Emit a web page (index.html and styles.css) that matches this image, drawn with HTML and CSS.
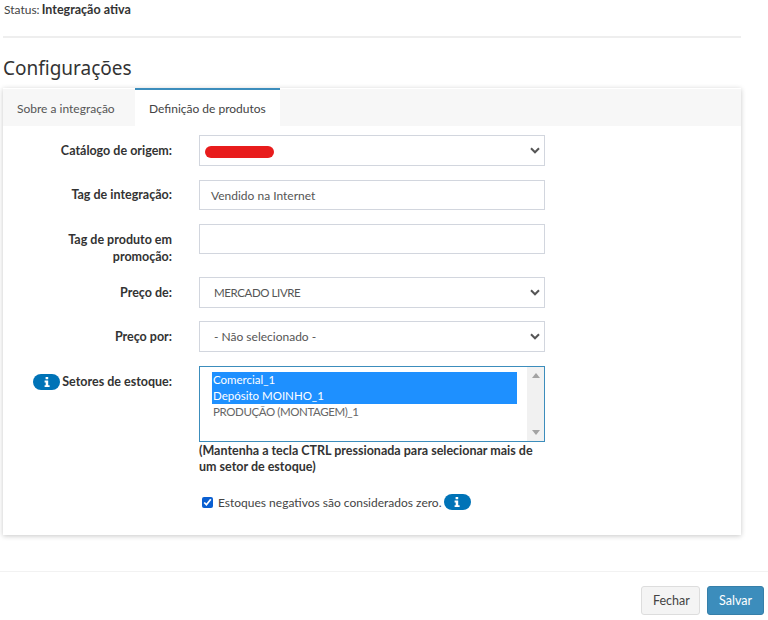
FILE: index.html
```html
<!DOCTYPE html>
<html lang="pt-BR">
<head>
<meta charset="utf-8">
<title>Configurações</title>
<link rel="stylesheet" href="styles.css">
</head>
<body>
<main class="content">
  <p class="status">Status: <strong>Integração ativa</strong></p>
  <hr class="rule">
  <h2 class="title">Configurações</h2>
  <section class="card">
    <nav class="tabs">
      <a class="tab">Sobre a integração</a>
      <a class="tab active">Definição de produtos</a>
    </nav>
    <form class="form">
      <div class="row row-select">
        <label class="label">Catálogo de origem:</label>
        <div class="control select">
          <span class="redaction"></span>
          <svg class="chev" width="10" height="7" viewBox="0 0 10 7"><path d="M1 1.3l4 4 4-4" fill="none" stroke="#555" stroke-width="2"/></svg>
        </div>
      </div>
      <div class="row row-input">
        <label class="label">Tag de integração:</label>
        <div class="control input">Vendido na Internet</div>
      </div>
      <div class="row row-input tall">
        <label class="label">Tag de produto em promoção:</label>
        <div class="control input"></div>
      </div>
      <div class="row row-select tight">
        <label class="label">Preço de:</label>
        <div class="control select"><span class="caps-value">MERCADO LIVRE</span>
          <svg class="chev" width="10" height="7" viewBox="0 0 10 7"><path d="M1 1.3l4 4 4-4" fill="none" stroke="#555" stroke-width="2"/></svg>
        </div>
      </div>
      <div class="row row-select">
        <label class="label">Preço por:</label>
        <div class="control select"><span>- Não selecionado -</span>
          <svg class="chev" width="10" height="7" viewBox="0 0 10 7"><path d="M1 1.3l4 4 4-4" fill="none" stroke="#555" stroke-width="2"/></svg>
        </div>
      </div>
      <div class="row row-list">
        <label class="label"><span class="info"><svg width="6" height="10" viewBox="0 0 6 10"><path d="M1.600 0h2.600v2.200H1.600zM.6 3.600h3.600v4.600H5.600V10H.6V8.200h1.100V5.400H.6z" fill="#fff"/></svg></span> Setores de estoque:</label>
        <div class="field">
          <div class="listbox">
            <div class="options">
              <div class="option selected">Comercial_1</div>
              <div class="option selected">Depósito MOINHO_1</div>
              <div class="option caps">PRODUÇÃO (MONTAGEM)_1</div>
            </div>
            <div class="scrollbar">
              <svg width="8" height="5" viewBox="0 0 8 5"><path d="M4 0l4 5H0z" fill="#a3a3a3"/></svg>
              <svg width="8" height="5" viewBox="0 0 8 5"><path d="M0 0h8L4 5z" fill="#a3a3a3"/></svg>
            </div>
          </div>
          <p class="help">(Mantenha a tecla CTRL pressionada para selecionar mais de um setor de estoque)</p>
          <div class="check-row">
            <input class="check" type="checkbox" checked>
            <span>Estoques negativos são considerados zero.</span>
            <span class="info"><svg width="6" height="10" viewBox="0 0 6 10"><path d="M1.600 0h2.600v2.200H1.600zM.6 3.600h3.600v4.600H5.600V10H.6V8.200h1.100V5.400H.6z" fill="#fff"/></svg></span>
          </div>
        </div>
      </div>
    </form>
  </section>
</main>
<footer class="footer">
  <button class="btn btn-default" type="button">Fechar</button>
  <button class="btn btn-primary" type="button">Salvar</button>
</footer>
</body>
</html>
```

FILE: styles.css
```css
* { box-sizing: border-box; }
html, body { margin: 0; padding: 0; }
body {
  width: 768px;
  height: 620px;
  overflow: hidden;
  background: #fff;
  color: #444;
  font-family: Lato, sans-serif;
  font-size: 12px;
}
.content { padding: 0 27px 0 3px; }
.status { margin: 0; padding: 1px 0 0 1px; height: 36px; line-height: 17px; color: #444; }
.status strong { color: #333; font-size: 12.500px; margin-left: -1px; }
.rule { margin: 0; border: 0; height: 2px; background: #eee; }
.title { margin: 0; padding-top: 17px; height: 50px; line-height: 26px; font-family: "Noto Sans", sans-serif; font-size: 19px; font-weight: 400; color: #333; }
.card { height: 447px; background: #fff; box-shadow: 0 1px 5px rgba(0,0,0,.22); border-top: 2px solid transparent; }
.tabs { display: flex; height: 37px; background: #f7f7f7; margin-top: -1px; }
.tab { display: flex; align-items: center; height: 38px; width: 132px; padding-left: 14px; color: #555; }
.tab.active { width: 145px; background: #fff; border-top: 2px solid #3c8dbc; margin-top: -1px; padding-left: 14px; color: #444; }
.form { padding-top: 9px; }
.row { display: flex; align-items: flex-start; margin-bottom: 14px; }
.label { flex: 0 0 169px; text-align: right; font-size: 12.500px; font-weight: 700; color: #333; line-height: 17px; padding-left: 30px; }
.control, .field { flex: 0 0 346px; margin-left: 27px; }
.control { display: flex; align-items: center; background: #fff; border: 1px solid #d2d6de; color: #555; }
.row-select .control { height: 31px; padding: 0 4px 0 14px; justify-content: space-between; }
.row-select .label { padding-top: 7px; }
.row-select.tight { margin-bottom: 13px; }
.caps-value { font-size: 11.500px; letter-spacing: -.4px; }
.row-input .control { height: 30px; padding: 0 11px; }
.row-input .label { padding-top: 6px; }
.row-input.tall { margin-bottom: 12px; }
.row-input.tall .label { padding-top: 7px; padding-left: 40px; }
.redaction { width: 69px; height: 12px; margin: 2px 0 0 -9px; border-radius: 6px; background: #e81c1c; }
.row-list { margin: 0; }
.row-list .label { padding: 7px 0 0; white-space: nowrap; display: flex; justify-content: flex-end; align-items: center; gap: 2px; }
.info { display: inline-flex; align-items: center; justify-content: center; width: 27px; height: 16px; border-radius: 8px; background: #0073b7; }
.listbox { display: flex; height: 76px; border: 1px solid #3c8dbc; padding: 5px 0 0 12px; }
.options { flex: 1; margin-right: 10px; font-size: 11.500px; }
.option { height: 16px; line-height: 16px; padding-left: 1px; color: #666; white-space: nowrap; }
.option.caps { letter-spacing: -.4px; }
.option.selected { background: #1e90ff; color: #fff; }
.scrollbar { display: flex; flex-direction: column; justify-content: space-between; align-items: center; width: 17px; margin-top: -5px; background: #f1f1f1; padding: 6px 0; }
.help { margin: 1px 0 0; font-size: 12.500px; font-weight: 700; line-height: 16px; color: #333; }
.check-row { display: flex; align-items: center; gap: 2px; margin: 19px 0 0 3px; }
.check { margin: 0 3px 0 0; width: 11px; height: 11px; accent-color: #0a5fd1; }
.footer { display: flex; justify-content: flex-end; gap: 7px; margin-top: 36px; padding: 14px 4px 0 0; border-top: 1px solid #f2f2f2; }
.btn { height: 29px; padding: 0 11px; border-radius: 3px; font: inherit; font-size: 12.500px; }
.btn-default { width: 59px; background: #f4f4f4; border: 1px solid #ddd; color: #444; }
.btn-primary { width: 57px; background: #3c8dbc; border: 1px solid #367fa9; color: #fff; }
```
